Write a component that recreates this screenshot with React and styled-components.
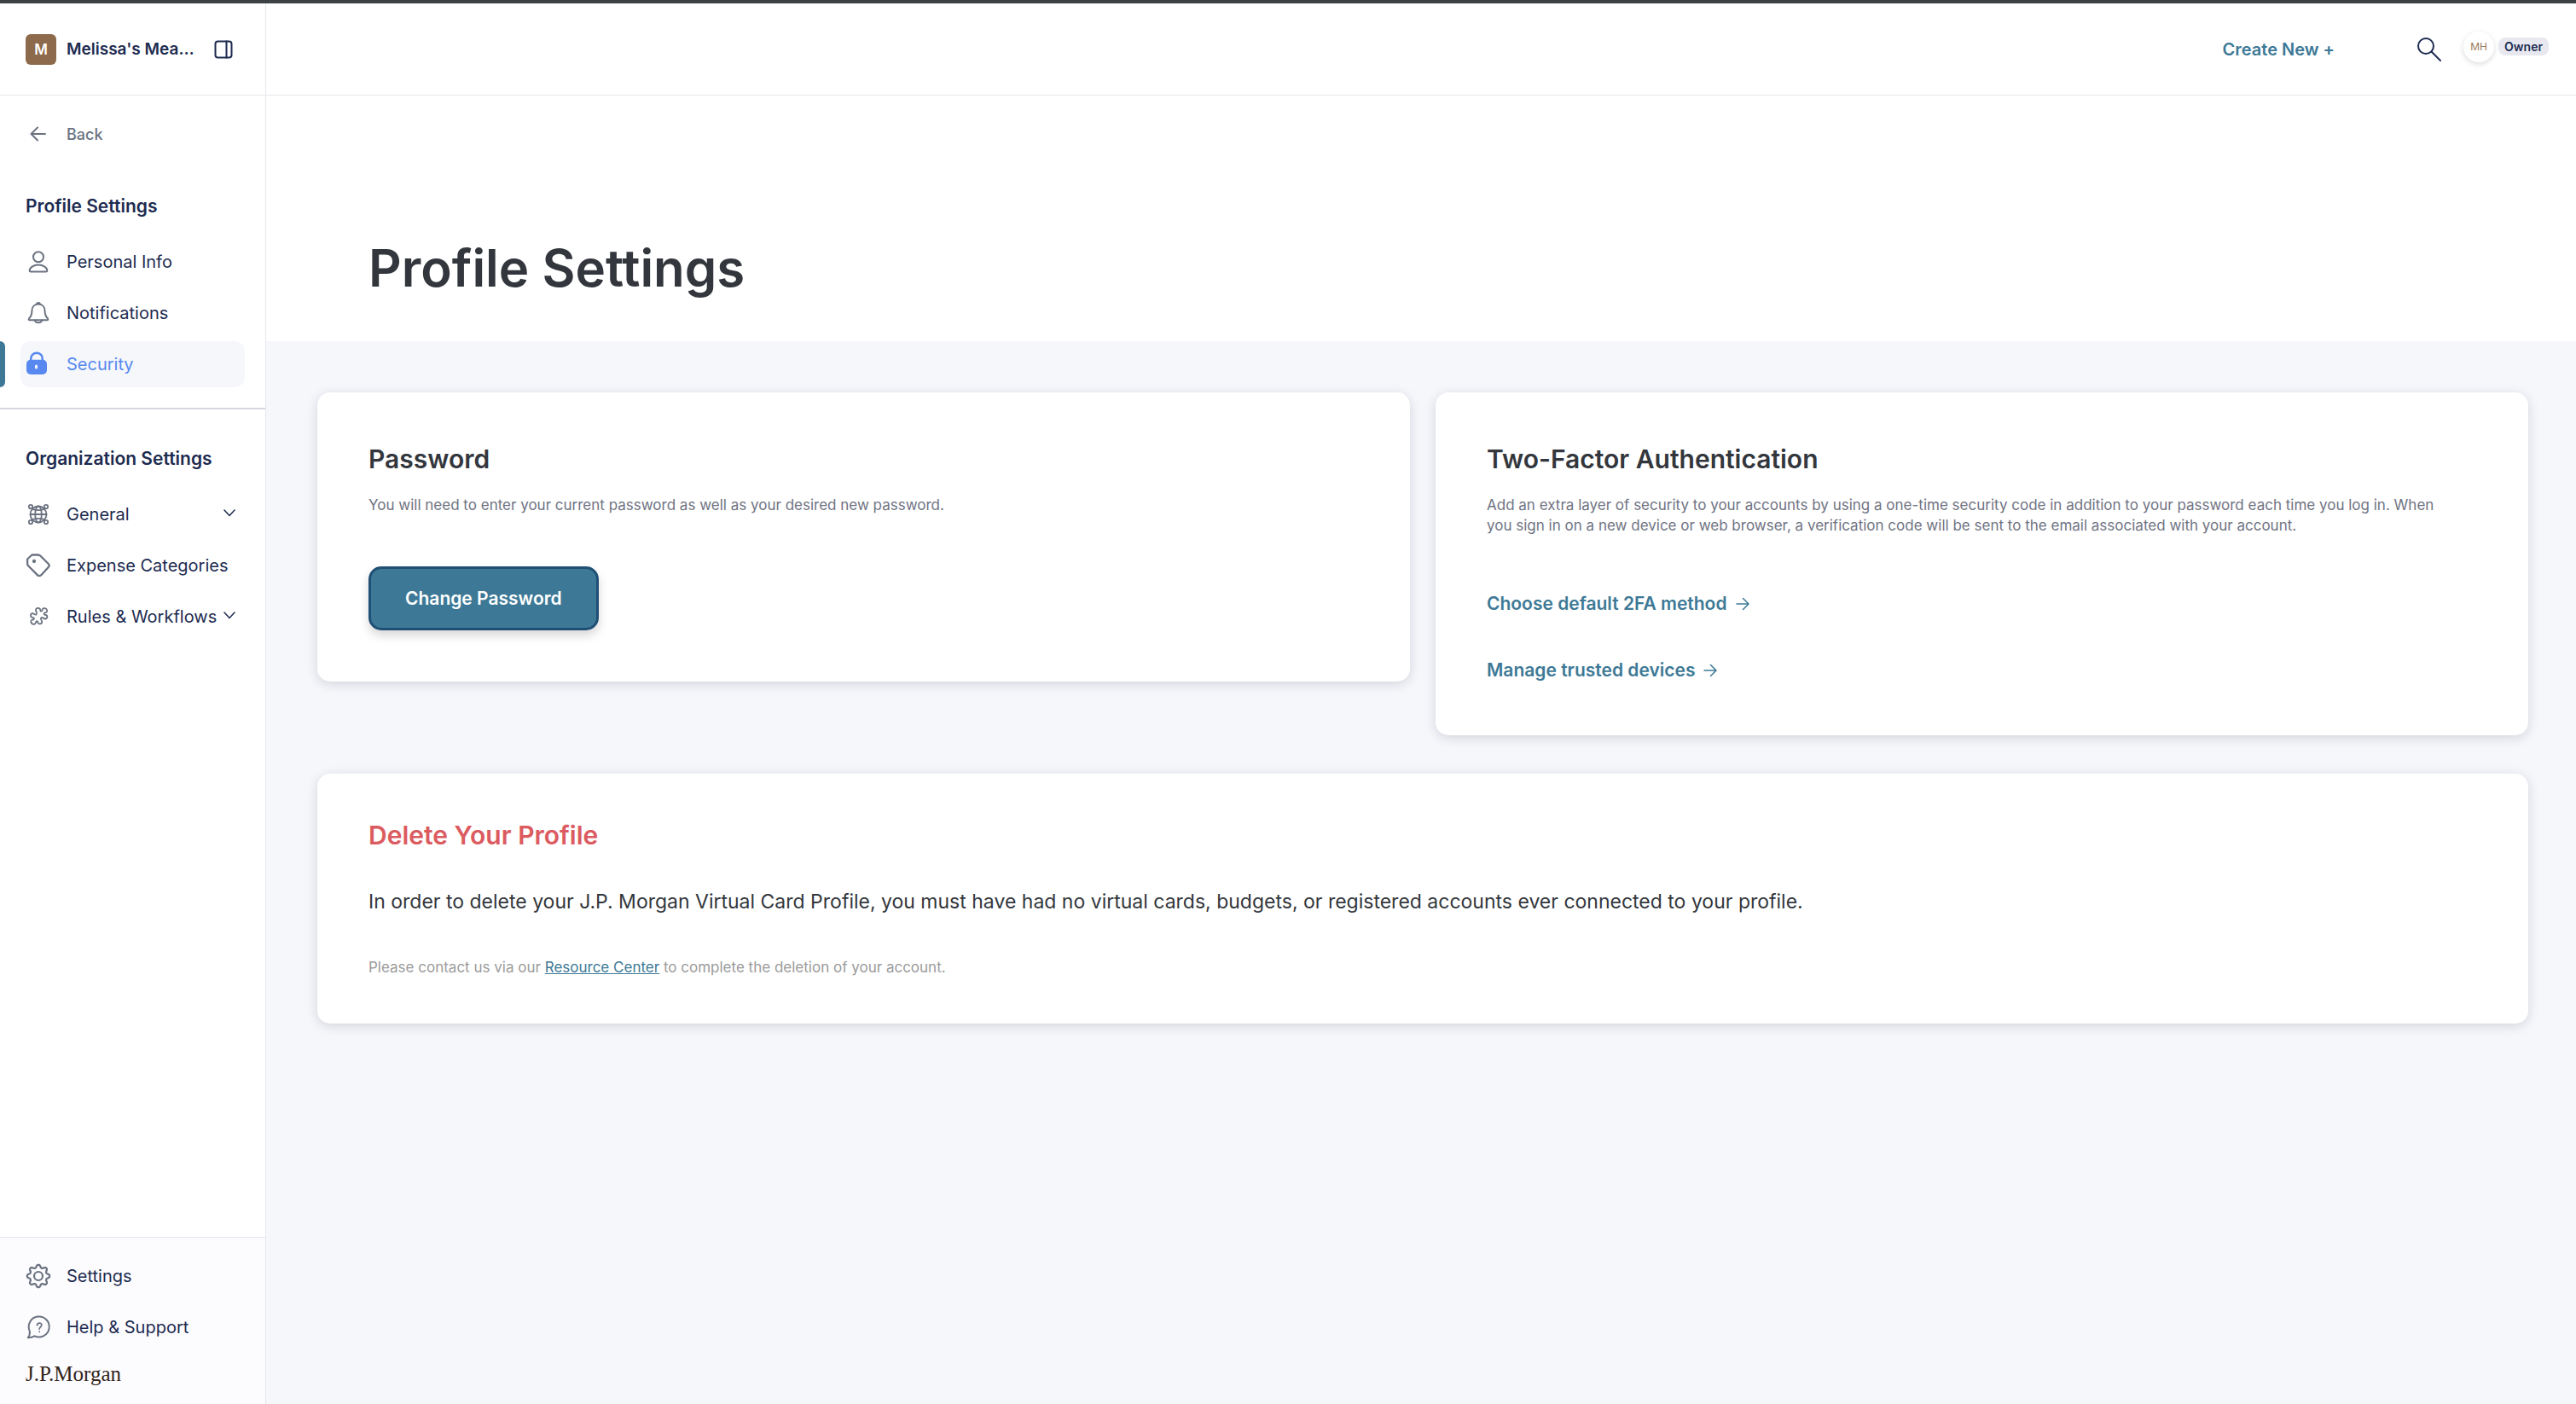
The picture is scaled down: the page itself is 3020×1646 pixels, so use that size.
import React from "react";
import styled, { createGlobalStyle, css } from "styled-components";

const GlobalStyle = createGlobalStyle`
  * {
    box-sizing: border-box;
  }
  body {
    margin: 0;
    font-family: Inter, Roboto, "Liberation Sans", sans-serif;
    color: #33373d;
    background: #f5f7fb;
  }
  button {
    font-family: inherit;
    cursor: pointer;
  }
`;

const Page = styled.div`
  display: flex;
  min-height: 100vh;
  border-top: 4px solid #3c4143;
`;

const Sidebar = styled.aside`
  display: flex;
  flex-direction: column;
  flex: none;
  width: 312px;
  background: #fff;
  border-right: 1px solid #e6e7ec;
`;

const SidebarHeader = styled.div`
  display: flex;
  align-items: center;
  height: 108px;
  padding: 0 38px 0 30px;
  border-bottom: 1px solid #e6e7ec;
`;

const OrgBadge = styled.span`
  display: flex;
  align-items: center;
  justify-content: center;
  width: 36px;
  height: 36px;
  margin-right: 12px;
  border-radius: 6px;
  background: #8d6a4b;
  color: #fff;
  font-size: 17px;
  font-weight: 600;
`;

const OrgName = styled.span`
  flex: 1;
  color: #1d2b50;
  font-size: 19px;
  font-weight: 600;
  white-space: nowrap;
`;

const IconButton = styled.button`
  display: flex;
  padding: 0;
  border: 0;
  background: none;
  color: #1d2b50;
`;

const Nav = styled.nav`
  flex: 1;
  padding-top: 18px;
`;

const NavList = styled.ul`
  display: flex;
  flex-direction: column;
  gap: 6px;
  margin: 0;
  padding: 0;
  list-style: none;
`;

const navItem = css`
  position: relative;
  display: flex;
  align-items: center;
  gap: 18px;
  height: 54px;
  margin: 0 24px;
  padding: 0 12px 0 6px;
  border-radius: 12px;
  color: #1d2b50;
  font-size: 20px;
  white-space: nowrap;
  text-decoration: none;

  svg {
    flex: none;
    color: #6b7280;
  }
`;

const NavLink = styled.a`
  ${navItem}

  ${props => props.$active && css`
    background: #f5f7fb;
    color: #5789f0;

    svg {
      color: #5789f0;
    }

    &::before {
      content: "";
      position: absolute;
      left: -24px;
      top: 0;
      bottom: 0;
      width: 6px;
      border-radius: 0 6px 6px 0;
      background: #3d7996;
    }
  `}
`;

const BackLink = styled.a`
  ${navItem}
  color: #6b7280;
  font-size: 18px;
  font-weight: 500;
`;

const NavToggle = styled.button`
  ${navItem}
  width: 264px;
  border: 0;
  background: none;

  svg:last-child {
    margin-left: auto;
    color: #1d2b50;
  }
`;

const ToggleLabel = styled.span`
  width: 180px;
  margin-right: -14px;
  text-align: left;
`;

const NavTitle = styled.h2`
  margin: 44px 30px 24px;
  color: #1d2b50;
  font-size: 21px;
  font-weight: 600;
  line-height: 28px;
  white-space: nowrap;
`;

const Divider = styled.hr`
  height: 2px;
  margin: 24px 0 0;
  border: 0;
  background: #d6d7df;
`;

const SidebarFooter = styled.div`
  padding: 18px 0 20px;
  border-top: 1px solid #e6e7ec;
  background: #fcfcfe;
`;

const Brand = styled.div`
  margin: 12px 30px 0;
  color: #33241a;
  font-family: "Liberation Serif", serif;
  font-size: 25px;
  line-height: 31px;
`;

const Main = styled.main`
  flex: 1;
  min-width: 0;
`;

const TopBar = styled.header`
  display: flex;
  align-items: center;
  justify-content: flex-end;
  height: 108px;
  padding-right: 32px;
  border-bottom: 1px solid #e6e7ec;
  background: #fff;
`;

const CreateButton = styled.button`
  margin-right: 96px;
  padding: 0;
  border: 0;
  background: none;
  color: #3d7996;
  font-size: 20px;
  font-weight: 600;
`;

const Account = styled.div`
  display: flex;
  align-items: center;
  gap: 5px;
  margin-left: 25px;
  padding-bottom: 6px;
`;

const Initials = styled.span`
  display: flex;
  align-items: center;
  justify-content: center;
  width: 36px;
  height: 36px;
  border-radius: 50%;
  background: #fff;
  box-shadow: 0 2px 6px rgba(0, 0, 0, .14);
  color: #9b7b5c;
  font-size: 12px;
`;

const Role = styled.span`
  padding: 0 7px;
  border-radius: 8px;
  background: #e8e9f0;
  color: #1d2b50;
  font-size: 14px;
  font-weight: 600;
  line-height: 21px;
`;

const Banner = styled.div`
  padding: 164px 120px 48px;
  background: #fff;
`;

const PageTitle = styled.h1`
  margin: 0;
  font-size: 60px;
  font-weight: 600;
  line-height: 76px;
`;

const Content = styled.div`
  display: grid;
  grid-template-columns: 1fr 1fr;
  align-items: start;
  gap: 45px 30px;
  padding: 60px 56px 60px 60px;
`;

const Card = styled.section`
  grid-column: ${props => props.$wide ? "1 / -1" : "auto"};
  padding: ${props => props.$wide ? "54px 60px" : "60px"};
  border-radius: 15px;
  background: #fff;
  box-shadow: 0 3px 14px rgba(20, 20, 40, .15);
`;

const CardTitle = styled.h2`
  margin: 0;
  color: ${props => props.$danger ? "#db5b60" : "#33373d"};
  font-size: 30px;
  font-weight: 600;
  line-height: 36px;
`;

const Description = styled.p`
  margin: 24px 0 0;
  padding-right: 24px;
  color: #6f7383;
  font-size: 17px;
  line-height: 24px;
`;

const Warning = styled.p`
  margin: 42px 0 0;
  font-size: 23px;
  line-height: 36px;
`;

const Note = styled.p`
  margin: 47px 0 0;
  color: #9b9b9b;
  font-size: 17px;
  line-height: 24px;
`;

const TextLink = styled.a`
  color: #3d7996;
`;

const PrimaryButton = styled.button`
  display: block;
  height: 75px;
  margin-top: 60px;
  padding: 0 40px;
  border: 3px solid #1f4f75;
  border-radius: 15px;
  background: #3d7996;
  box-shadow: 0 6px 12px rgba(0, 0, 0, .16);
  color: #fff;
  font-size: 21px;
  font-weight: 600;
`;

const ActionList = styled.div`
  display: flex;
  flex-direction: column;
  align-items: flex-start;
  gap: 46px;
  margin-top: 64px;
`;

const ActionLink = styled.a`
  display: flex;
  align-items: center;
  gap: 10px;
  color: #3d7996;
  font-size: 21px;
  font-weight: 600;
  line-height: 32px;
  text-decoration: none;
`;

const Icon = ({ size = 30, strokeWidth = 2, children }) => (
    <svg width={size} height={size} viewBox={`0 0 ${size} ${size}`} fill="none" stroke="currentColor"
         strokeWidth={strokeWidth} strokeLinecap="round" strokeLinejoin="round" aria-hidden="true">
        {children}
    </svg>
);

const BackIcon = () => <Icon><path d="M23 15H6.500M14 7.500L6.500 15l7.500 7.500"/></Icon>;

const PersonIcon = () => <Icon>
    <circle cx="15" cy="9.300" r="6"/>
    <path d="M4.700 25.300c0-3.300 4.500-6.800 10.300-6.800s10.300 3.500 10.300 6.800q0 1.300-1.300 1.300H6q-1.300 0-1.300-1.300z"/>
</Icon>;

const BellIcon = () => <Icon>
    <path d="M15 4.500c-4.800 0-7.600 3.500-7.600 8.200 0 4.300-1.300 6.600-3.300 8.600-.8.900-.4 2 .8 2h20.200c1.200 0 1.600-1.100.8-2-2-2-3.300-4.300-3.300-8.600 0-4.700-2.800-8.200-7.600-8.200z"/>
    <path d="M13.300 4.300c0-1.600 3.400-1.600 3.400 0M11 23.500c.4 3.800 7.600 3.800 8 0"/>
</Icon>;

const LockIcon = () => <Icon>
    <path d="M6.200 12V8.500a6.800 6.800 0 0 1 13.600 0V12" strokeWidth="2.500"/>
    <rect x="1" y="9.700" width="24" height="17.300" rx="5" fill="currentColor" stroke="none"/>
    <rect x="11" y="15.500" width="3" height="5" rx="1.500" fill="#f5f7fb" stroke="none"/>
</Icon>;

const NetworkIcon = () => <Icon strokeWidth={1.8}>
    <circle cx="15" cy="15" r="9.500"/>
    <ellipse cx="15" cy="15" rx="3.800" ry="9.500"/>
    <path d="M5.500 15h19M8 8.800q7 2.800 14 0M8 21.200q7-2.800 14 0"/>
    {[[6, 6], [24, 6], [6, 24], [24, 24]].map(([x, y]) => (
        <circle key={`${x}-${y}`} cx={x} cy={y} r="2.200" fill="#fff"/>
    ))}
</Icon>;

const TagIcon = () => <Icon strokeWidth={2.3}>
    <path d="M7.500 2.500h7c1.200 0 2.200.4 3 1.200l9 9c1.300 1.300 1.300 3.300 0 4.600l-8 8.800c-1.300 1.400-3.300 1.400-4.600 0l-10.600-10.600c-.8-.8-1.200-1.800-1.200-3V7.500z"/>
    <circle cx="10" cy="10" r="1" fill="currentColor"/>
</Icon>;

const PuzzleIcon = () => <Icon strokeWidth={1.8}>
    <path d="M12 7.500c-.5-3.300 5-3.700 5.200-.6.100 1.700.9 2.100 2 1.100 1-1-.1-2.500 2-2.800 3-.4 4.800 1.800 3.700 4.200-.6 1.200-2.100.5-2.900 1.400-.9 1-.3 1.900 1.300 2 3 .3 2.500 5-.4 4.700-1.800-.2-3.300-2.500-4.700-1.200-1.200 1.200.7 2.600 1 4.300.4 2.900-4.300 4.100-4.700 1.200-.2-1.600-1.100-2.100-2-1.100-.9.900 0 2.400-1.800 2.900-2.900.7-5-1.600-4.200-3.800.5-1.400 2.100-.9 3-1.800 1-1 .3-1.900-1.200-2.100-3-.4-3-4.700-.1-4.800 1.800 0 2.900 2.400 4.400 1.300 1.300-1-.3-3-.6-4.900z"/>
</Icon>;

// eight rounded teeth around the hub
const gearPath = Array.from({ length: 97 }, (_, i) => {
    const angle = (i / 96) * Math.PI * 2;
    const wave = Math.cos(angle * 8);
    const radius = 11.6 + 1.7 * Math.tanh(wave * 1.5);
    const x = 15 + radius * Math.cos(angle);
    const y = 15 + radius * Math.sin(angle);
    return `${i ? "L" : "M"}${x.toFixed(2)} ${y.toFixed(2)}`;
}).join("") + "z";

const GearIcon = () => <Icon strokeWidth={2.2}>
    <path d={gearPath}/>
    <circle cx="15" cy="15" r="5"/>
</Icon>;

const HelpIcon = () => <Icon>
    <path d="M4.800 19.500A12 12 0 1 1 10.500 25.300Q7 27.300 2.800 27.200q2.700-3.200 2-7.700z"/>
    <path d="M13.600 12.700c0-3.600 5.300-3.400 5.200-.2 0 2-2.600 2.200-2.600 4.500M16.200 20.200v.1" strokeWidth="1.800"/>
</Icon>;

const ChevronIcon = () => <Icon size={14} strokeWidth={1.5}><path d="M1 2l6 6.500L13 2"/></Icon>;

const ArrowIcon = () => <Icon size={16} strokeWidth={1.5}><path d="M1 8h14M8.500 1.500L15 8l-6.500 6.500"/></Icon>;

const PanelIcon = () => <Icon size={22}>
    <rect x="1.500" y="1.500" width="19" height="19" rx="3"/>
    <path d="M14.500 1.500v19"/>
</Icon>;

const SearchIcon = () => <Icon size={30}>
    <circle cx="11" cy="11" r="9"/>
    <path d="M17.500 17.500L28 28"/>
</Icon>;

const App = () => (
    <>
        <GlobalStyle/>
        <Page>
            <Sidebar>
                <SidebarHeader>
                    <OrgBadge>M</OrgBadge>
                    <OrgName>Melissa's Mea…</OrgName>
                    <IconButton aria-label="Collapse sidebar"><PanelIcon/></IconButton>
                </SidebarHeader>
                <Nav>
                    <BackLink href="#back"><BackIcon/>Back</BackLink>
                    <NavTitle>Profile Settings</NavTitle>
                    <NavList>
                        <li><NavLink href="#personal"><PersonIcon/>Personal Info</NavLink></li>
                        <li><NavLink href="#notifications"><BellIcon/>Notifications</NavLink></li>
                        <li><NavLink href="#security" $active aria-current="page"><LockIcon/>Security</NavLink></li>
                    </NavList>
                    <Divider/>
                    <NavTitle>Organization Settings</NavTitle>
                    <NavList>
                        <li><NavToggle><NetworkIcon/><ToggleLabel>General</ToggleLabel><ChevronIcon/></NavToggle></li>
                        <li><NavLink href="#categories"><TagIcon/>Expense Categories</NavLink></li>
                        <li><NavToggle><PuzzleIcon/><ToggleLabel>Rules &amp; Workflows</ToggleLabel><ChevronIcon/></NavToggle></li>
                    </NavList>
                </Nav>
                <SidebarFooter>
                    <NavList>
                        <li><NavLink href="#settings"><GearIcon/>Settings</NavLink></li>
                        <li><NavLink href="#help"><HelpIcon/>Help &amp; Support</NavLink></li>
                    </NavList>
                    <Brand>J.P.Morgan</Brand>
                </SidebarFooter>
            </Sidebar>
            <Main>
                <TopBar>
                    <CreateButton>Create New +</CreateButton>
                    <IconButton aria-label="Search"><SearchIcon/></IconButton>
                    <Account>
                        <Initials>MH</Initials>
                        <Role>Owner</Role>
                    </Account>
                </TopBar>
                <Banner>
                    <PageTitle>Profile Settings</PageTitle>
                </Banner>
                <Content>
                    <Card>
                        <CardTitle>Password</CardTitle>
                        <Description>
                            You will need to enter your current password as well as your desired new password.
                        </Description>
                        <PrimaryButton>Change Password</PrimaryButton>
                    </Card>
                    <Card>
                        <CardTitle>Two-Factor Authentication</CardTitle>
                        <Description>
                            Add an extra layer of security to your accounts by using a one-time security code in
                            addition to your password each time you log in. When you sign in on a new device or web
                            browser, a verification code will be sent to the email associated with your account.
                        </Description>
                        <ActionList>
                            <ActionLink href="#2fa">Choose default 2FA method<ArrowIcon/></ActionLink>
                            <ActionLink href="#devices">Manage trusted devices<ArrowIcon/></ActionLink>
                        </ActionList>
                    </Card>
                    <Card $wide>
                        <CardTitle $danger>Delete Your Profile</CardTitle>
                        <Warning>
                            In order to delete your J.P. Morgan Virtual Card Profile, you must have had no virtual
                            cards, budgets, or registered accounts ever connected to your profile.
                        </Warning>
                        <Note>
                            Please contact us via our <TextLink href="#resources">Resource Center</TextLink> to
                            complete the deletion of your account.
                        </Note>
                    </Card>
                </Content>
            </Main>
        </Page>
    </>
);

export default App;
